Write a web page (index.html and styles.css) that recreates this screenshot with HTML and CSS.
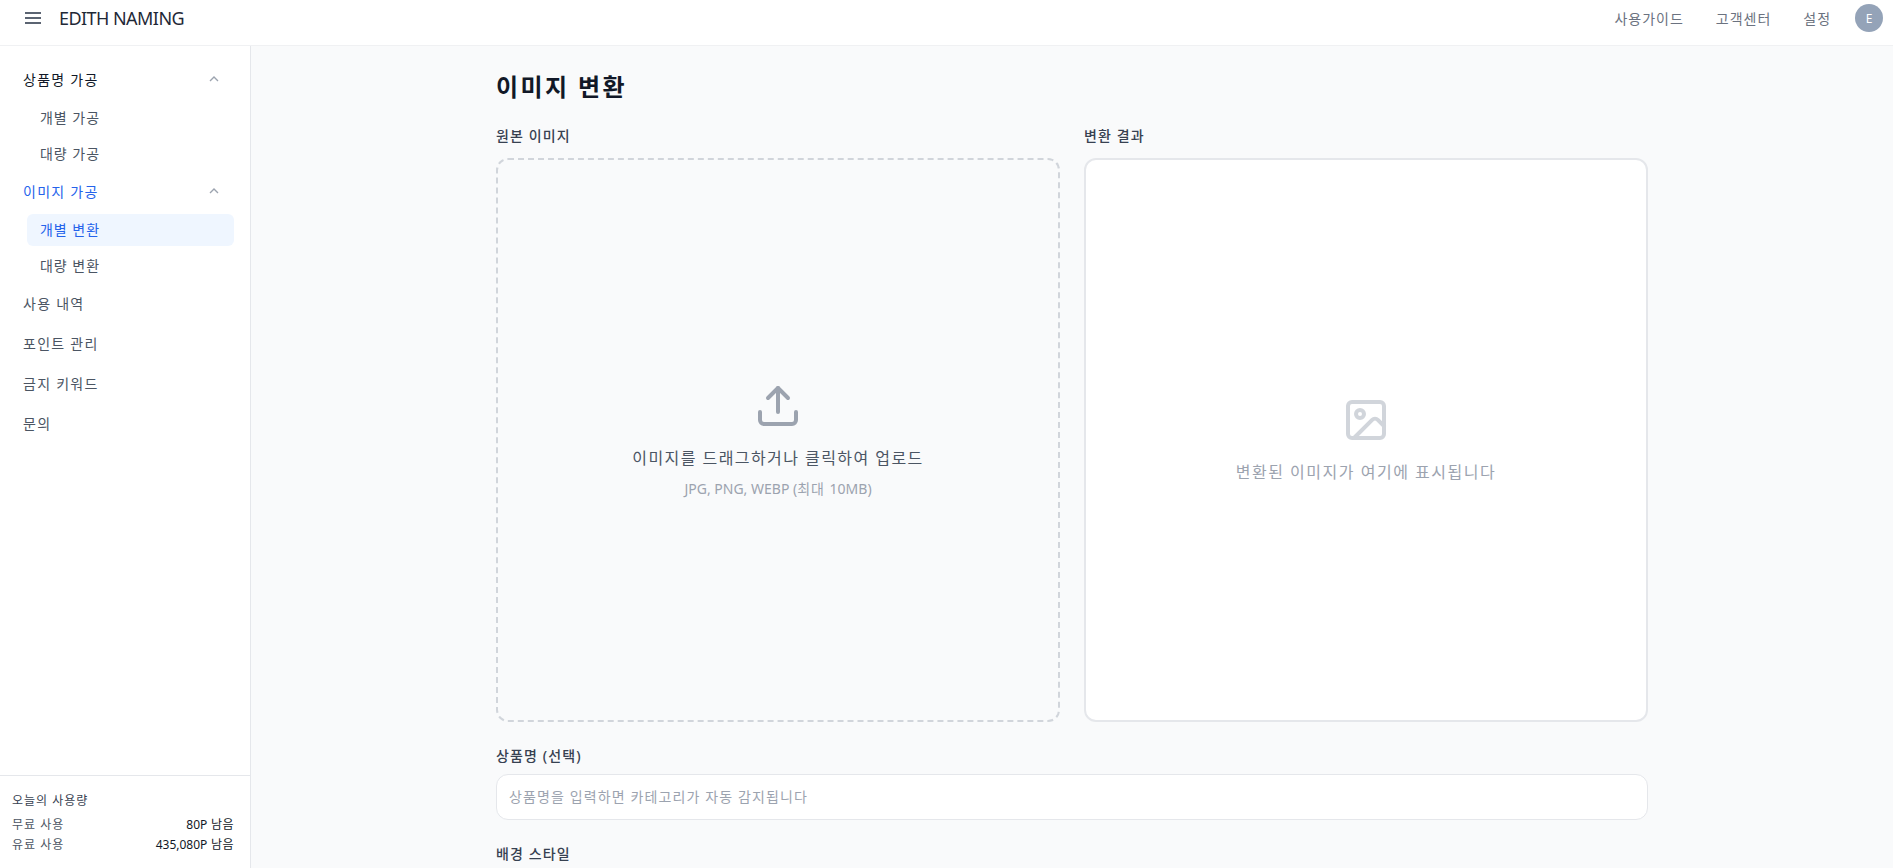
FILE: index.html
```html
<!DOCTYPE html>
<html lang="ko">
<head>
    <meta charset="UTF-8">
    <meta name="viewport" content="width=device-width, initial-scale=1.0">
    <title>EDITH NAMING - 이미지 변환</title>
    <link rel="stylesheet" href="styles.css">
</head>
<body>
    <header class="topbar">
        <div class="brand">
            <button class="menu-btn" aria-label="메뉴">
                <svg class="menu-icon" viewBox="0 0 16 12"><path d="M0 1h16M0 6h16M0 11h16"/></svg>
            </button>
            <span class="brand-name">EDITH NAMING</span>
        </div>
        <nav class="top-links">
            <a href="#">사용가이드</a>
            <a href="#">고객센터</a>
            <a href="#">설정</a>
            <span class="avatar">E</span>
        </nav>
    </header>

    <div class="layout">
        <aside class="sidebar">
            <nav class="side-nav">
                <div class="nav-item open">
                    <span>상품명 가공</span>
                    <svg class="chevron" viewBox="0 0 24 24"><path d="m18 15-6-6-6 6"/></svg>
                </div>
                <div class="sub-list">
                    <a href="#">개별 가공</a>
                    <a href="#">대량 가공</a>
                </div>
                <div class="nav-item current">
                    <span>이미지 가공</span>
                    <svg class="chevron" viewBox="0 0 24 24"><path d="m18 15-6-6-6 6"/></svg>
                </div>
                <div class="sub-list">
                    <a href="#" class="active">개별 변환</a>
                    <a href="#">대량 변환</a>
                </div>
                <div class="nav-item">사용 내역</div>
                <div class="nav-item">포인트 관리</div>
                <div class="nav-item">금지 키워드</div>
                <div class="nav-item">문의</div>
            </nav>

            <div class="usage">
                <div class="usage-title">오늘의 사용량</div>
                <div class="usage-row"><span>무료 사용</span><b><span class="latin">80P</span> 남음</b></div>
                <div class="usage-row"><span>유료 사용</span><b><span class="latin">435,080P</span> 남음</b></div>
            </div>
        </aside>

        <main class="content">
            <div class="inner">
                <h1>이미지 변환</h1>

                <div class="panels">
                    <div>
                        <div class="label">원본 이미지</div>
                        <div class="box dropzone">
                            <svg class="box-icon upload" viewBox="0 0 24 24">
                                <path d="M21 15v4a2 2 0 0 1-2 2H5a2 2 0 0 1-2-2v-4"/>
                                <path d="m17 8-5-5-5 5"/>
                                <path d="M12 3v12"/>
                            </svg>
                            <p class="drop-text">이미지를 드래그하거나 클릭하여 업로드</p>
                            <p class="drop-hint"><span class="latin">JPG, PNG, WEBP (</span>최대 <span class="latin">10MB)</span></p>
                        </div>
                    </div>
                    <div>
                        <div class="label">변환 결과</div>
                        <div class="box result">
                            <svg class="box-icon picture" viewBox="0 0 24 24">
                                <rect x="3" y="3" width="18" height="18" rx="2"/>
                                <circle cx="9" cy="9" r="2"/>
                                <path d="m21 15-3.086-3.086a2 2 0 0 0-2.828 0L6 21"/>
                            </svg>
                            <p class="result-text">변환된 이미지가 여기에 표시됩니다</p>
                        </div>
                    </div>
                </div>

                <div class="field">
                    <label class="label" for="productName">상품명 (선택)</label>
                    <input id="productName" type="text" placeholder="상품명을 입력하면 카테고리가 자동 감지됩니다">
                </div>

                <div class="field">
                    <div class="label">배경 스타일</div>
                </div>
            </div>
        </main>
    </div>
</body>
</html>
```

FILE: styles.css
```css
* {
    box-sizing: border-box;
}
html, body {
    height: 100%;
}
body {
    margin: 0;
    display: flex;
    flex-direction: column;
    overflow: hidden;
    font-family: "Noto Sans", "Noto Sans CJK KR", sans-serif;
    font-size: 14px;
    letter-spacing: 0.07em;
    color: #111827;
    background-color: #f9fafb;
}
a {
    text-decoration: none;
    color: inherit;
}
.latin {
    letter-spacing: 0;
}

/* top bar */
.topbar {
    height: 46px;
    flex: none;
    display: flex;
    justify-content: space-between;
    padding: 4px 10px 0 25px;
    background-color: white;
    border-bottom: 1px solid #f0f1f3;
}
.brand {
    height: 28px;
    display: flex;
    align-items: center;
    gap: 18px;
}
.menu-btn {
    padding: 0;
    border: none;
    background: none;
    display: flex;
}
.menu-icon {
    width: 16px;
    height: 12px;
    fill: none;
    stroke: #5b6472;
    stroke-width: 2;
}
.brand-name {
    font-size: 18px;
    letter-spacing: -0.55px;
    color: #1f2937;
}
.top-links {
    height: 28px;
    display: flex;
    align-items: center;
    gap: 32px;
    color: #6b7280;
}
.top-links .avatar {
    margin-left: -8px;
}
.avatar {
    width: 28px;
    height: 28px;
    border-radius: 50%;
    display: flex;
    align-items: center;
    justify-content: center;
    font-size: 12px;
    letter-spacing: 0;
    color: white;
    background-color: #94a3b8;
}

/* sidebar */
.layout {
    flex: 1;
    min-height: 0;
    display: flex;
}
.sidebar {
    width: 251px;
    flex: none;
    display: flex;
    flex-direction: column;
    background-color: white;
    border-right: 1px solid #e5e7eb;
}
.side-nav {
    flex: 1;
    padding: 14px 16px 0 23px;
}
.nav-item {
    height: 40px;
    padding-bottom: 2px;
    display: flex;
    align-items: center;
    justify-content: space-between;
    letter-spacing: 0.09em;
    color: #4b5563;
}
.nav-item.open {
    color: #111827;
}
.nav-item.current {
    color: #2563eb;
}
.chevron {
    width: 16px;
    height: 16px;
    margin-right: 12px;
    fill: none;
    stroke: #9ca3af;
    stroke-width: 2;
}
.sub-list {
    margin: 2px 0 2px 4px;
    display: flex;
    flex-direction: column;
    gap: 4px;
}
.sub-list a {
    height: 32px;
    padding: 0 0 2px 13px;
    display: flex;
    align-items: center;
    border-radius: 6px;
    color: #4b5563;
}
.sub-list a.active {
    color: #2563eb;
    background-color: #eff6ff;
}
.usage {
    padding: 17px 16px 15px 12px;
    border-top: 1px solid #e5e7eb;
    font-size: 12px;
    line-height: 16px;
}
.usage-title {
    margin-bottom: 8px;
    color: #374151;
}
.usage-row {
    display: flex;
    justify-content: space-between;
    margin-top: 4px;
    color: #4b5563;
}
.usage-row b {
    font-weight: 400;
    letter-spacing: 0.04em;
    color: #111827;
}

/* main */
.content {
    flex: 1;
    min-width: 0;
    overflow: hidden;
    padding-top: 25px;
}
.inner {
    width: 1152px;
    margin: 0 auto;
}
h1 {
    margin: 0 0 23px;
    font-size: 24px;
    line-height: 32px;
    font-weight: 700;
    letter-spacing: 0.1em;
    color: #111827;
}
.label {
    display: block;
    margin-bottom: 12px;
    font-size: 14px;
    line-height: 20px;
    font-weight: 500;
    letter-spacing: 0.08em;
    color: #374151;
}
.panels {
    display: grid;
    grid-template-columns: 1fr 1fr;
    gap: 24px;
}
.box {
    height: 564px;
    display: flex;
    flex-direction: column;
    align-items: center;
    justify-content: center;
    border-radius: 12px;
}
.box p {
    margin: 0;
}
.dropzone {
    border: 2px dashed #d1d5db;
}
.result {
    background-color: white;
    border: 2px solid #e5e7eb;
}
.box-icon {
    width: 48px;
    height: 48px;
    fill: none;
    stroke-width: 2;
    stroke-linecap: round;
    stroke-linejoin: round;
}
.upload {
    stroke: #9ca3af;
    margin-bottom: 16px;
}
.picture {
    stroke: #d1d5db;
    margin-bottom: 16px;
}
.drop-text {
    font-size: 16px;
    line-height: 24px;
    letter-spacing: 0.09em;
    color: #4b5563;
}
.box .drop-hint {
    margin-top: 8px;
    padding-top: 1px;
    line-height: 20px;
    color: #9ca3af;
}
.result-text {
    font-size: 16px;
    line-height: 24px;
    letter-spacing: 0.095em;
    color: #9ca3af;
}
.field {
    margin-top: 24px;
}
.field .label {
    margin-bottom: 8px;
}
.field input {
    display: block;
    width: 100%;
    height: 46px;
    padding: 0 12px 2px;
    font: inherit;
    letter-spacing: 0.08em;
    color: #111827;
    background-color: white;
    border: 1px solid #e5e7eb;
    border-radius: 12px;
    outline: none;
}
.field input::placeholder {
    color: #9ca3af;
}
```
